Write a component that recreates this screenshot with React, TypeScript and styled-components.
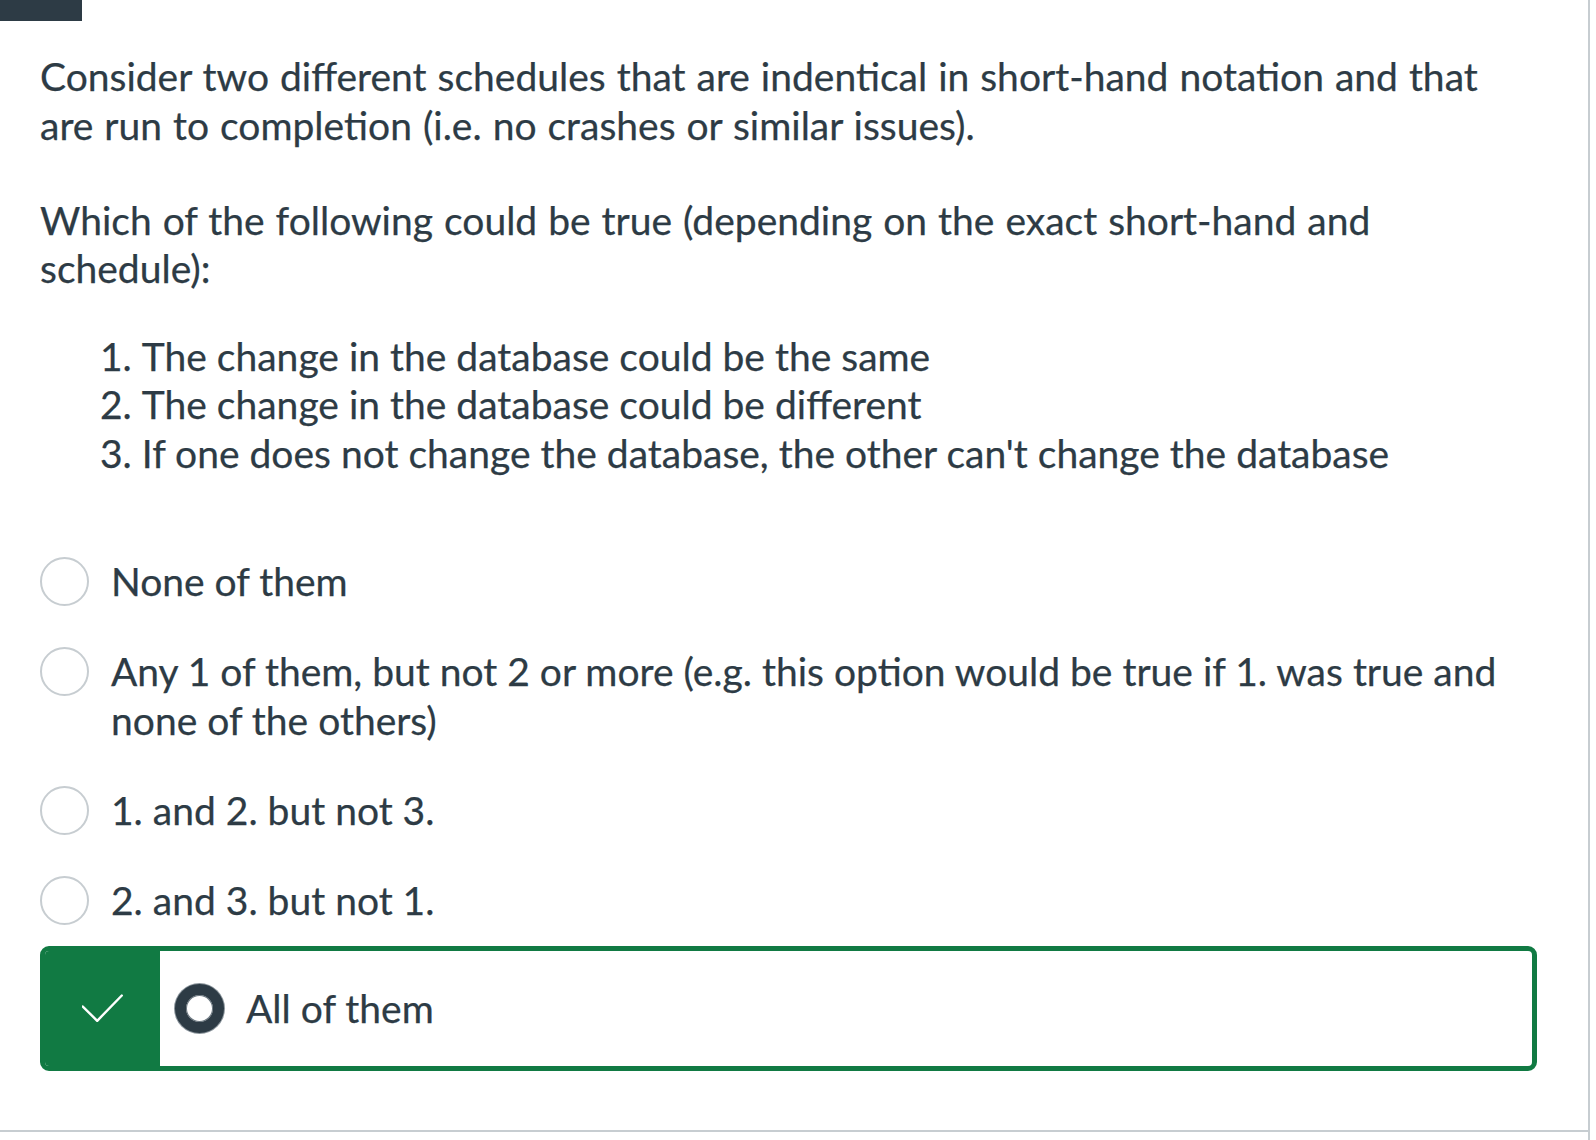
import * as React from 'react';
import styled, { createGlobalStyle } from 'styled-components';

const GlobalStyle = createGlobalStyle`
  body {
    margin: 0;
    background: #ffffff;
    font-family: Lato, 'Noto Sans', sans-serif;
    color: #2d3b45;
    -webkit-font-smoothing: antialiased;
  }
`;

const Shell = styled.div`
  display: flex;
  height: 1140px;
  overflow: hidden;
`;

const Panel = styled.div`
  width: 1590px;
  border-right: 2px solid #c7cdd1;
  box-sizing: border-box;
`;

const Question = styled.div`
  height: 1132px;
  box-sizing: border-box;
  border-bottom: 2px solid #c7cdd1;
`;

const HeaderTab = styled.div`
  width: 82px;
  height: 21px;
  background: #2d3b45;
`;

const Body = styled.div`
  padding: 31px 51px 0 40px;
  font-size: 39px;
  line-height: 48.6px;
  -webkit-text-stroke: 0.25px #2d3b45;
`;

const Paragraph = styled.p<{ gap: number }>`
  max-width: 1470px;
  margin: 0 0 ${(p) => p.gap}px;
  word-spacing: 1px;
`;

const List = styled.ol`
  margin: 0 0 58.5px;
  padding: 0 0 0 60px;
  list-style-position: inside;
`;

const Answers = styled.div`
  display: flex;
  flex-direction: column;
`;

const AnswerRow = styled.div`
  display: flex;
  align-items: flex-start;
  gap: 22px;
  padding: 20.7px 0;
`;

const Radio = styled.span<{ checked?: boolean }>`
  flex: none;
  width: 49px;
  height: 49px;
  box-sizing: border-box;
  border-radius: 50%;
  background: #fff;
  border: ${(p) => (p.checked ? '11px solid #2d3b45' : '2px solid #c7cdd1')};
  box-shadow: ${(p) =>
    p.checked ? 'inset 0 0 0 1px #6b7780, 0 0 0 1px #8a949b' : 'none'};
`;

const AnswerText = styled.span`
  flex: 1;
`;

const CorrectBox = styled.div`
  display: flex;
  align-items: stretch;
  height: 125px;
  box-sizing: border-box;
  border: 5px solid #117a43;
  border-radius: 9px;
  overflow: hidden;
`;

const CorrectBadge = styled.div`
  flex: none;
  width: 115px;
  background: #117a43;
  display: flex;
  align-items: center;
  justify-content: center;
`;

const CorrectChoice = styled.div`
  display: flex;
  align-items: center;
  gap: 22px;
  padding-left: 15px;
`;

const answers = [
  'None of them',
  'Any 1 of them, but not 2 or more (e.g. this option would be true if 1. was true and none of the others)',
  '1. and 2. but not 3.',
  '2. and 3. but not 1.',
];

export default function App() {
  return (
    <>
      <GlobalStyle />
      <Shell>
        <Panel>
          <Question>
            <HeaderTab />
            <Body>
              <Paragraph gap={46.5}>
                Consider two different schedules that are indentical in short-hand notation and that
                are run to completion (i.e. no crashes or similar issues).
              </Paragraph>
              <Paragraph gap={38.8}>
                Which of the following could be true (depending on the exact short-hand and
                schedule):
              </Paragraph>
              <List>
                <li>The change in the database could be the same</li>
                <li>The change in the database could be different</li>
                <li>If one does not change the database, the other can't change the database</li>
              </List>
              <Answers>
                {answers.map((text) => (
                  <AnswerRow key={text}>
                    <Radio />
                    <AnswerText>{text}</AnswerText>
                  </AnswerRow>
                ))}
                <CorrectBox>
                  <CorrectBadge>
                    <svg width="41" height="28" viewBox="0 0 41 28" fill="none">
                      <polyline
                        points="0.8,12.5 15.2,26.8 39.8,1.5"
                        stroke="#ffffff"
                        strokeWidth="2.4"
                        strokeLinecap="round"
                        strokeLinejoin="round"
                      />
                    </svg>
                  </CorrectBadge>
                  <CorrectChoice>
                    <Radio checked />
                    <AnswerText>All of them</AnswerText>
                  </CorrectChoice>
                </CorrectBox>
              </Answers>
            </Body>
          </Question>
        </Panel>
      </Shell>
    </>
  );
}
